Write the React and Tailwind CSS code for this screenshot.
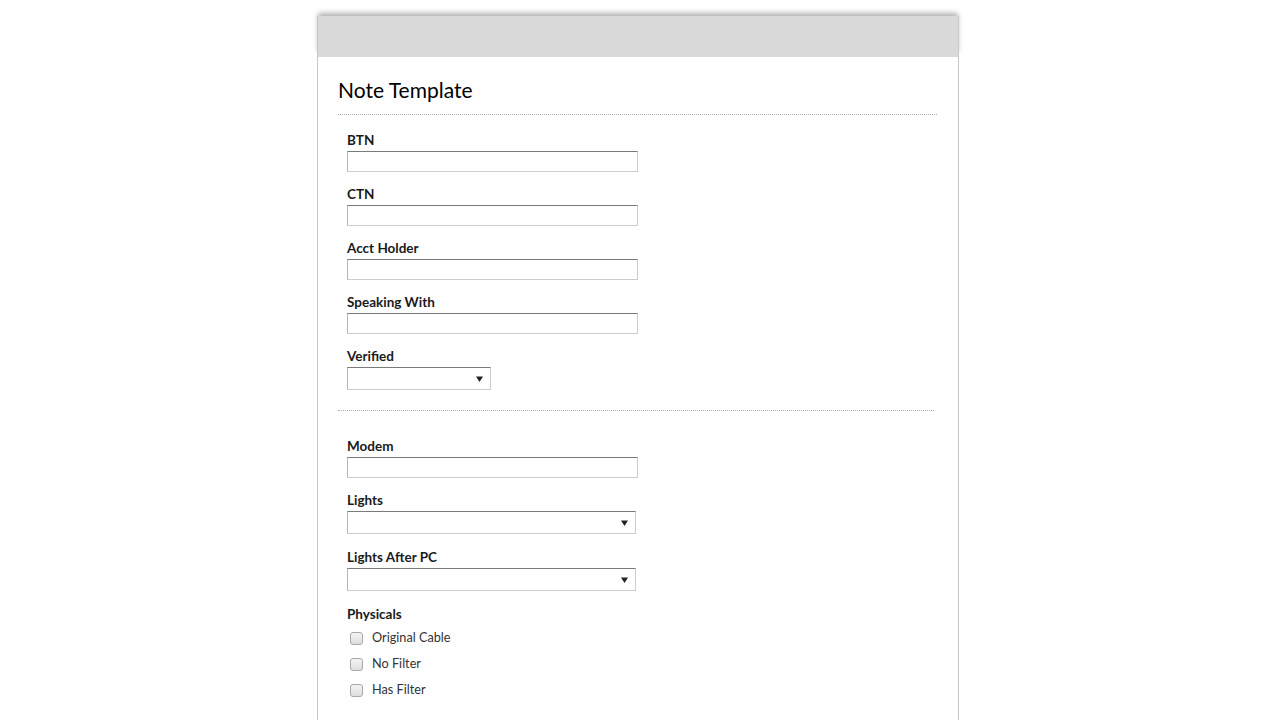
import React from "react";

function Label({ children }) {
  return (
    <div className="h-[18px] leading-[18px] text-[13.5px] font-bold text-[#1a1a1a]">
      {children}
    </div>
  );
}

function TextField({ label }) {
  return (
    <div className="mb-[13px]">
      <Label>{label}</Label>
      <div className="mt-[2px] h-[21px] w-[291px] border border-[#cccccc] border-t-[#7a7a7a] border-l-[#b5b5b5] bg-white" />
    </div>
  );
}

function SelectField({ label, width, mb = "mb-[14px]" }) {
  return (
    <div className={mb}>
      <Label>{label}</Label>
      <div
        className={`mt-[2px] h-[23px] ${width} border border-[#cccccc] border-t-[#7a7a7a] border-l-[#b5b5b5] bg-white flex items-center justify-end pr-[7px]`}
      >
        <svg width="7" height="6" viewBox="0 0 7 6">
          <path d="M0 0.5 H7 L3.5 6 Z" fill="#222" />
        </svg>
      </div>
    </div>
  );
}

function Check({ label }) {
  return (
    <div className="h-[26px] flex items-center">
      <div className="ml-[3px] w-[13px] h-[13px] rounded-[3px] border border-[#a8a8a8] bg-gradient-to-b from-[#f4f4f4] to-[#dedede]" />
      <span className="ml-[9px] text-[12.7px] text-[#333]">{label}</span>
    </div>
  );
}

export default function App() {
  return (
    <div className="min-h-[720px] bg-white" style={{ fontFamily: "Lato, 'Open Sans', sans-serif" }}>
      <div className="ml-[317px] w-[642px] pt-4">
        <div className="h-[41px] bg-[#d9d9d9] border-x border-[#c8c8c8] shadow-[0_-4px_5px_-1px_rgba(0,0,0,0.3)]" />
        <div className="min-h-[663px] border-x border-[#c8c8c8] bg-white px-[20px] pt-[18px]">
          <h1 className="h-[30px] leading-[30px] text-[21px] text-black">Note Template</h1>
          <div className="mt-[9px] w-[599px] border-t border-dotted border-[#b0b0b0]" />
          <div className="pl-[9px] pt-[16px]">
            <TextField label="BTN" />
            <TextField label="CTN" />
            <TextField label="Acct Holder" />
            <TextField label="Speaking With" />
            <SelectField label="Verified" width="w-[144px]" mb="mb-[20px]" />
          </div>
          <div className="w-[596px] border-t border-dotted border-[#b0b0b0]" />
          <div className="pl-[9px] pt-[26px]">
            <TextField label="Modem" />
            <SelectField label="Lights" width="w-[289px]" />
            <SelectField label="Lights After PC" width="w-[289px]" />
            <Label>Physicals</Label>
            <div className="mt-[2px]">
              <Check label="Original Cable" />
              <Check label="No Filter" />
              <Check label="Has Filter" />
            </div>
          </div>
        </div>
      </div>
    </div>
  );
}
